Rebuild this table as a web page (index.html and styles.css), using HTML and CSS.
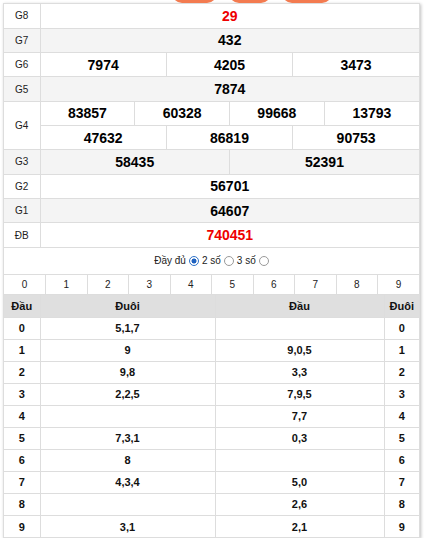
FILE: index.html
```html
<!DOCTYPE html>
<html lang="vi">
<head>
<meta charset="utf-8">
<title>KQXS</title>
<link rel="stylesheet" href="styles.css">
</head>
<body>
<div class="tabs"><span class="pill p1"></span><span class="pill p2"></span><span class="pill p3"></span></div>
<div class="box">
  <table class="kq">
    <colgroup><col class="c-lbl"><col span="12"></colgroup>
    <tr><td class="lbl">G8</td><td colspan="12" class="num red">29</td></tr>
    <tr class="alt"><td class="lbl">G7</td><td colspan="12" class="num">432</td></tr>
    <tr><td class="lbl">G6</td><td colspan="4" class="num">7974</td><td colspan="4" class="num">4205</td><td colspan="4" class="num">3473</td></tr>
    <tr class="alt"><td class="lbl">G5</td><td colspan="12" class="num">7874</td></tr>
    <tr><td class="lbl" rowspan="2">G4</td><td colspan="3" class="num">83857</td><td colspan="3" class="num">60328</td><td colspan="3" class="num">99668</td><td colspan="3" class="num">13793</td></tr>
    <tr><td colspan="4" class="num">47632</td><td colspan="4" class="num">86819</td><td colspan="4" class="num">90753</td></tr>
    <tr class="alt"><td class="lbl">G3</td><td colspan="6" class="num">58435</td><td colspan="6" class="num">52391</td></tr>
    <tr><td class="lbl">G2</td><td colspan="12" class="num">56701</td></tr>
    <tr class="alt"><td class="lbl">G1</td><td colspan="12" class="num">64607</td></tr>
    <tr><td class="lbl">ĐB</td><td colspan="12" class="num red">740451</td></tr>
  </table>
  <div class="opts">
    <span>Đầy đủ</span><input type="radio" name="m" class="rd" checked>
    <span>2 số</span><input type="radio" name="m" class="rd">
    <span>3 số</span><input type="radio" name="m" class="rd">
  </div>
  <table class="dig">
    <tr><td>0</td><td>1</td><td>2</td><td>3</td><td>4</td><td>5</td><td>6</td><td>7</td><td>8</td><td>9</td></tr>
  </table>
  <table class="lt">
    <colgroup><col class="c1"><col class="c2"><col class="c3"><col class="c4"></colgroup>
    <tr class="hd"><th>Đầu</th><th>Đuôi</th><th>Đầu</th><th>Đuôi</th></tr>
    <tr><td>0</td><td>5,1,7</td><td></td><td>0</td></tr>
    <tr><td>1</td><td>9</td><td>9,0,5</td><td>1</td></tr>
    <tr><td>2</td><td>9,8</td><td>3,3</td><td>2</td></tr>
    <tr><td>3</td><td>2,2,5</td><td>7,9,5</td><td>3</td></tr>
    <tr><td>4</td><td></td><td>7,7</td><td>4</td></tr>
    <tr><td>5</td><td>7,3,1</td><td>0,3</td><td>5</td></tr>
    <tr><td>6</td><td>8</td><td></td><td>6</td></tr>
    <tr><td>7</td><td>4,3,4</td><td>5,0</td><td>7</td></tr>
    <tr><td>8</td><td></td><td>2,6</td><td>8</td></tr>
    <tr><td>9</td><td>3,1</td><td>2,1</td><td>9</td></tr>
  </table>
</div>
</body>
</html>
```
FILE: styles.css
```css
body {
  margin: 0;
  font-family: "Liberation Sans", Arial, sans-serif;
  background: #fff;
  color: #000;
}
.tabs {
  display: flex;
  gap: 11px;
  height: 3px;
  padding-left: 172px;
}
.pill {
  display: block;
  height: 30px;
  margin-top: -27px;
  border-radius: 10px;
  background: #f37b50;
}
.p1 { width: 45px; }
.p2 { width: 42px; margin-left: 1px; }
.p3 { width: 50px; }
.box {
  margin-left: 3px;
  width: 417px;
  box-sizing: border-box;
  border: 1px solid #ddd;
  box-shadow: 1px 1px 3px rgba(0, 0, 0, 0.25);
}
table {
  width: 100%;
  border-collapse: collapse;
  table-layout: fixed;
}
td, th {
  border: 1px solid #ddd;
  text-align: center;
  padding: 0;
}
.kq, .dig {
  border-style: hidden;
}
.c-lbl { width: 36px; }
.kq tr { height: 24.3px; }
.kq .lbl {
  font-size: 10px;
  color: #222;
}
.kq .num {
  font-size: 14px;
  font-weight: bold;
}
.kq tr.alt td { background: #f4f4f4; }
.red { color: #e00; }
.opts {
  height: 26px;
  border-top: 1px solid #ddd;
  border-bottom: 1px solid #ddd;
  display: flex;
  align-items: center;
  justify-content: center;
  font-size: 10px;
  color: #222;
  gap: 3px;
}
.rd {
  appearance: none;
  -webkit-appearance: none;
  margin: 0;
  width: 10px;
  height: 10px;
  border: 1px solid #9a9a9a;
  border-radius: 50%;
  background: #fff;
  box-sizing: border-box;
}
.rd:checked {
  border-color: #2f73c9;
  background: radial-gradient(circle, #1f62c0 0 2.2px, #fff 2.8px);
}
.dig tr { height: 19px; }
.dig td {
  font-size: 10px;
  color: #222;
}
.lt {
  border-top: 1px solid #ddd;
  border-left-style: hidden;
  border-right-style: hidden;
  border-bottom-style: hidden;
}
.c1 { width: 36px; }
.c2 { width: 175px; }
.c3 { width: 169px; }
.c4 { width: 35px; }
.lt tr { height: 22px; }
.lt th, .lt td {
  font-size: 11px;
  font-weight: bold;
  color: #111;
}
.lt .hd th {
  background: #dfdfdf;
  height: 22px;
}
```
